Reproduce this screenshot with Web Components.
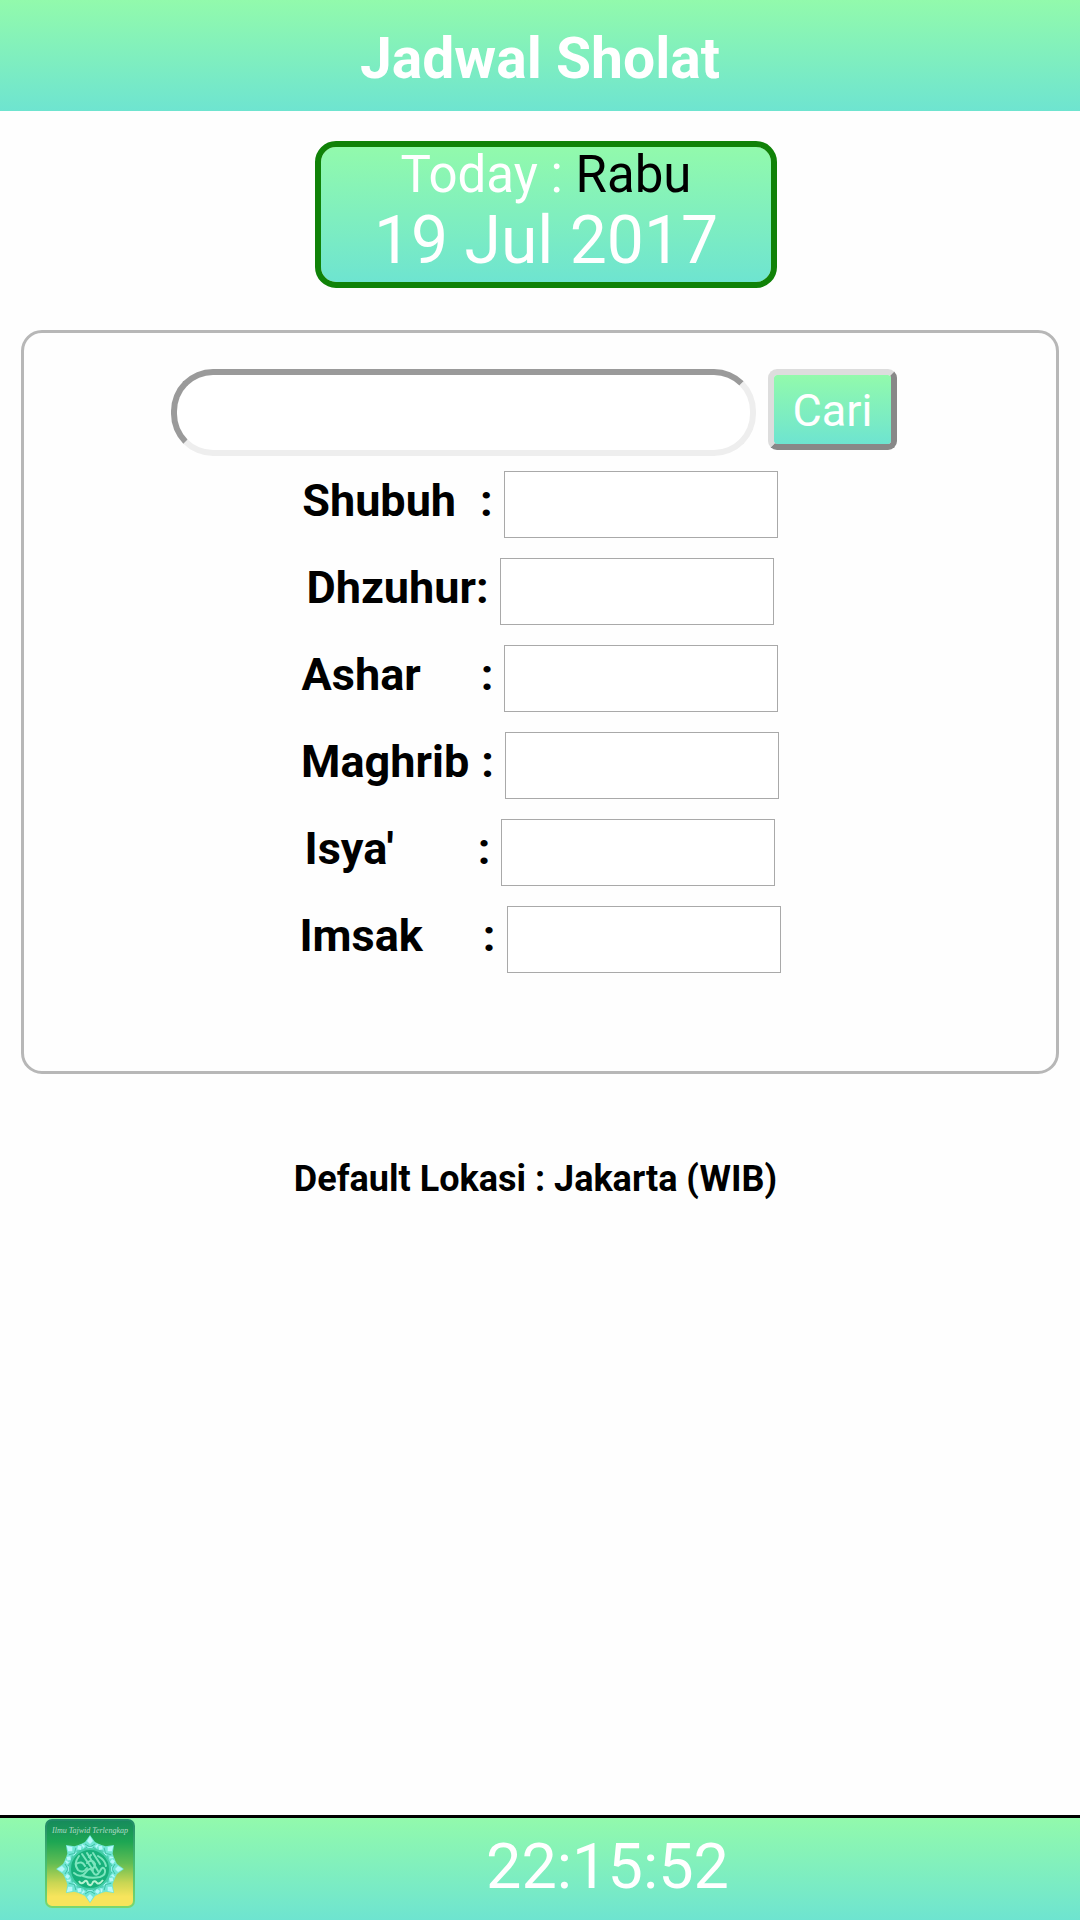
<!DOCTYPE html>
<html lang="id">
<head>
<meta charset="utf-8">
<meta name="viewport" content="width=device-width, initial-scale=1">
<title>Jadwal Sholat</title>
<style>
    html {
        --top-color: #92faac;
        --bottom-color: #6ee4d0;
    }

    body {
        margin: 0;
        background-color: #fefefe;
        color: #000;
        font-family: Roboto, "Noto Sans", sans-serif;
    }
</style>
</head>
<body>
<sholat-app></sholat-app>

<script>
customElements.define('sholat-header', class extends HTMLElement {

    constructor() {
        super();
        const shadowRoot = this.attachShadow({mode: 'open'});

        shadowRoot.innerHTML = `
            <style>
                :host {
                    display: block;
                    padding: 27px 0 20px;
                    background: linear-gradient(var(--top-color), var(--bottom-color));
                    color: #fff;
                    text-align: center;
                }

                h1 {
                    margin: 0;
                    font-size: 57px;
                    line-height: 64px;
                    font-weight: bold;
                }
            </style>

            <h1><slot></slot></h1>
        `;
    }
});

customElements.define('sholat-date', class extends HTMLElement {

    constructor() {
        super();
        const shadowRoot = this.attachShadow({mode: 'open'});

        shadowRoot.innerHTML = `
            <style>
                :host {
                    display: block;
                    width: 450px;
                    padding-bottom: 3px;
                    border: 6px solid #108208;
                    border-radius: 21px;
                    background: linear-gradient(var(--top-color), var(--bottom-color)) padding-box;
                    color: #fff;
                    text-align: center;
                }

                .day {
                    font-size: 51px;
                    line-height: 56px;
                }

                .name {
                    color: #000;
                }

                .date {
                    font-size: 66px;
                    line-height: 76px;
                }
            </style>

            <div class="day">Today : <span class="name"><slot name="day"></slot></span></div>
            <div class="date"><slot></slot></div>
        `;
    }
});

customElements.define('sholat-search', class extends HTMLElement {

    constructor() {
        super();
        const shadowRoot = this.attachShadow({mode: 'open'});

        shadowRoot.innerHTML = `
            <style>
                :host {
                    display: block;
                    padding-right: 12px;
                }

                form {
                    display: flex;
                    justify-content: center;
                    align-items: flex-start;
                    gap: 12px;
                }

                input {
                    box-sizing: border-box;
                    width: 585px;
                    height: 87px;
                    padding: 0 30px;
                    border: 6px solid;
                    border-color: #9a9a9a #eee #eee #9a9a9a;
                    border-radius: 42px;
                    background-color: #fff;
                    font: 40px Roboto, sans-serif;
                }

                button {
                    box-sizing: border-box;
                    width: 129px;
                    height: 81px;
                    padding: 2px 0 0;
                    border: 6px solid;
                    border-color: #ddd #888 #888 #ddd;
                    border-radius: 9px;
                    background: linear-gradient(var(--top-color), var(--bottom-color)) padding-box;
                    color: #fff;
                    font: 45px Roboto, sans-serif;
                }
            </style>

            <form>
                <input type="text" aria-label="Cari">
                <button type="button">Cari</button>
            </form>
        `;
    }
});

// <sholat-time spaces="n">: n is the number of blanks between the name and its colon
customElements.define('sholat-time', class extends HTMLElement {

    constructor() {
        super();
        const shadowRoot = this.attachShadow({mode: 'open'});

        shadowRoot.innerHTML = `
            <style>
                :host {
                    display: flex;
                    justify-content: center;
                    align-items: flex-start;
                }

                label {
                    display: flex;
                    gap: calc(var(--spaces, 0) * 12px);
                    font-size: 45px;
                    line-height: 60px;
                    font-weight: bold;
                }

                input {
                    box-sizing: border-box;
                    width: 274px;
                    height: 67px;
                    margin: 0 0 0 11px;
                    padding: 0 6px;
                    border: 1px solid #a9a9a9;
                    background-color: #fff;
                    font: 40px Roboto, sans-serif;
                }
            </style>

            <label for="time"><span><slot></slot></span><span>:</span></label>
            <input id="time" type="text" readonly>
        `;
    }

    connectedCallback() {
        const label = this.shadowRoot.querySelector('label');
        label.style.setProperty('--spaces', this.getAttribute('spaces') || 0);
    }
});

customElements.define('sholat-card', class extends HTMLElement {

    constructor() {
        super();
        const shadowRoot = this.attachShadow({mode: 'open'});

        shadowRoot.innerHTML = `
            <style>
                :host {
                    display: block;
                    padding: 36px 0 98px;
                    border: 3px solid #b7b7b7;
                    border-radius: 21px;
                }

                .times {
                    display: grid;
                    gap: 20px;
                    margin-top: 15px;
                }
            </style>

            <slot name="search"></slot>
            <div class="times"><slot></slot></div>
        `;
    }
});

customElements.define('sholat-logo', class extends HTMLElement {

    constructor() {
        super();
        const shadowRoot = this.attachShadow({mode: 'open'});

        shadowRoot.innerHTML = `
            <style>
                :host {
                    display: block;
                    width: 90px;
                    height: 90px;
                }

                svg {
                    display: block;
                    width: 100%;
                    height: 100%;
                }
            </style>

            <svg viewBox="0 0 90 90" aria-hidden="true">
                <defs>
                    <linearGradient id="tile" x2="0" y2="1">
                        <stop offset="0" stop-color="#168a5c"/>
                        <stop offset=".25" stop-color="#1da653"/>
                        <stop offset=".5" stop-color="#62bd53"/>
                        <stop offset=".72" stop-color="#c9d653"/>
                        <stop offset=".88" stop-color="#f7e45c"/>
                    </linearGradient>
                    <linearGradient id="edge" x2="0" y2="1">
                        <stop offset="0" stop-color="#218b68"/>
                        <stop offset=".5" stop-color="#48bd70"/>
                        <stop offset="1" stop-color="#79d76e"/>
                    </linearGradient>
                    <!-- one of the eight arms of the star -->
                    <g id="arm">
                        <path d="M-11 -24 L-5 -27 L0 -34 L5 -27 L11 -24 L10 -17 L-10 -17Z" fill="#6fe6d4"/>
                        <path d="M0 -33 L-3 -28 L0 -25 L3 -28Z M-8 -25 L-10 -22 L-7 -20 L-5 -23Z M8 -25 L10 -22 L7 -20 L5 -23Z M0 -23 L-2 -21 L0 -19 L2 -21Z" fill="#b4f8fb"/>
                        <path d="M-5 -25 L0 -22 L5 -25 M-7 -19 L-3 -22 M7 -19 L3 -22" fill="none" stroke="#3fc0a5"/>
                    </g>
                </defs>
                <rect x="1" y="1" width="88" height="87" rx="6" fill="url(#tile)" stroke="url(#edge)" stroke-width="2"/>
                <text x="45" y="14" text-anchor="middle" fill="#b4dcc8" font-family="Liberation Serif, serif" font-size="8" font-style="italic">Ilmu Tajwid Terlengkap</text>
                <g transform="translate(45 50)">
                    <circle r="25" fill="#6fe6d4"/>
                    <use href="#arm"/>
                    <use href="#arm" transform="rotate(45)"/>
                    <use href="#arm" transform="rotate(90)"/>
                    <use href="#arm" transform="rotate(135)"/>
                    <use href="#arm" transform="rotate(180)"/>
                    <use href="#arm" transform="rotate(225)"/>
                    <use href="#arm" transform="rotate(270)"/>
                    <use href="#arm" transform="rotate(315)"/>
                    <circle r="20" fill="#17b17b" stroke="#42cda5" stroke-width="2"/>
                    <g fill="none" stroke="#7de5be" stroke-width="2" stroke-linecap="round">
                        <path d="M-11 -13 Q-17 -5 -12 1 Q-7 5 -3 -1 M-14 -5 Q-8 -9 -5 -3 M-8 -15 L3 1 M-3 -16 L8 2 M3 -16 L10 -5"/>
                        <path d="M-16 4 Q-9 10 -4 3 Q0 -3 3 3 Q6 9 10 2 Q13 -4 15 1 Q16 6 10 8 Q1 10 -7 7"/>
                        <path d="M-3 -6 Q2 -11 5 -5 Q5 0 0 0 M8 -13 Q15 -9 16 -3 M-1 -12 L1 -14"/>
                    </g>
                    <path d="M-11 12 Q-9 16 -6 13 Q-3 10 -2 15 Q1 18 3 13 Q5 11 7 14 Q9 16 13 11" fill="none" stroke="#b8f3d2" stroke-width="2"/>
                </g>
            </svg>
        `;
    }
});

customElements.define('sholat-footer', class extends HTMLElement {

    constructor() {
        super();
        const shadowRoot = this.attachShadow({mode: 'open'});

        shadowRoot.innerHTML = `
            <style>
                :host {
                    display: flex;
                    align-items: flex-start;
                    padding: 1px 0 5px 45px;
                    border-top: 3px solid #000;
                    background: linear-gradient(var(--top-color), var(--bottom-color));
                    color: #fff;
                }

                .clock {
                    flex: 1;
                    font-size: 63px;
                    line-height: 96px;
                    text-align: center;
                }
            </style>

            <sholat-logo></sholat-logo>
            <div class="clock"><slot></slot></div>
        `;
    }
});

customElements.define('sholat-app', class extends HTMLElement {

    constructor() {
        super();
        const shadowRoot = this.attachShadow({mode: 'open'});

        shadowRoot.innerHTML = `
            <style>
                :host {
                    display: flex;
                    flex-direction: column;
                    min-height: 100vh;
                }

                main {
                    flex: 1;
                    padding: 30px 21px;
                }

                .today {
                    padding-left: 12px;
                }

                sholat-date {
                    margin: 0 auto 42px;
                }

                .location {
                    margin: 81px 9px 0 0;
                    font-size: 36px;
                    line-height: 48px;
                    font-weight: bold;
                    text-align: center;
                }
            </style>

            <sholat-header>Jadwal Sholat</sholat-header>
            <main>
                <div class="today">
                    <sholat-date><span slot="day">Rabu</span>19 Jul 2017</sholat-date>
                </div>
                <sholat-card>
                    <sholat-search slot="search"></sholat-search>
                    <sholat-time spaces="2">Shubuh</sholat-time>
                    <sholat-time>Dhzuhur</sholat-time>
                    <sholat-time spaces="5">Ashar</sholat-time>
                    <sholat-time spaces="1">Maghrib</sholat-time>
                    <sholat-time spaces="7">Isya'</sholat-time>
                    <sholat-time spaces="5">Imsak</sholat-time>
                </sholat-card>
                <p class="location">Default Lokasi : Jakarta (WIB)</p>
            </main>
            <sholat-footer>22:15:52</sholat-footer>
        `;
    }
});
</script>
</body>
</html>
